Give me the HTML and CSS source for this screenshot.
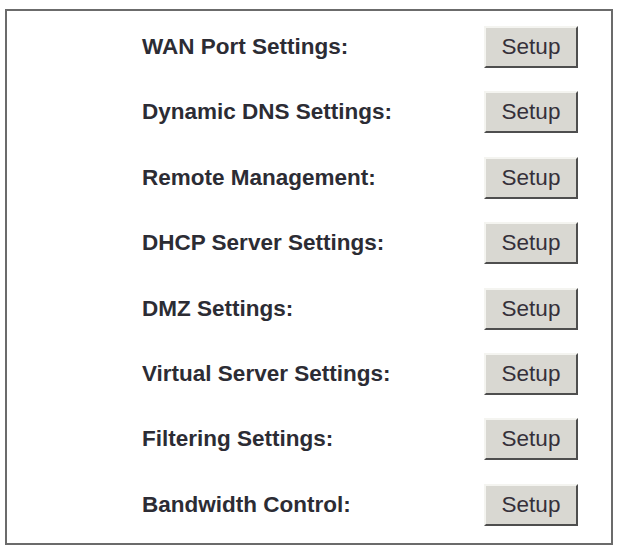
FILE: index.html
```html
<!DOCTYPE html>
<html>
<head lang="en">
    <meta charset="UTF-8">
    <title>Advanced Settings</title>
    <link rel="stylesheet" href="styles.css">
</head>
<body>
<div id="panel">
    <div class="row"><span class="label">WAN Port Settings:</span><button class="setup">Setup</button></div>
    <div class="row"><span class="label">Dynamic DNS Settings:</span><button class="setup">Setup</button></div>
    <div class="row"><span class="label">Remote Management:</span><button class="setup">Setup</button></div>
    <div class="row"><span class="label">DHCP Server Settings:</span><button class="setup">Setup</button></div>
    <div class="row"><span class="label">DMZ Settings:</span><button class="setup">Setup</button></div>
    <div class="row"><span class="label">Virtual Server Settings:</span><button class="setup">Setup</button></div>
    <div class="row"><span class="label">Filtering Settings:</span><button class="setup">Setup</button></div>
    <div class="row"><span class="label">Bandwidth Control:</span><button class="setup">Setup</button></div>
</div>
</body>
</html>
```

FILE: styles.css
```css
body,div,span,button{ margin:0; padding:0;}

body{
    background-color: #ffffff;
    font-family: "Liberation Sans", Arial, sans-serif;
}

#panel{
    width: 608px;
    margin: 9px 0 0 5px;
    border: 2px solid #6b6b6b;
    padding: 15px 33px 17px 135px;
    box-sizing: border-box;

    display: flex;
    flex-direction: column;
    gap: 23.4px;
}
#panel .row{
    height: 42px;
    display: flex;
    align-items: center;
    justify-content: space-between;
}
#panel .label{
    font-size: 22.5px;
    font-weight: bold;
    color: #2c2c34;
}
#panel .setup{
    width: 94px;
    height: 42px;
    box-sizing: border-box;
    background-color: #d9d8d2;
    border: 2px solid;
    border-color: #f4f4f0 #4e4e4e #4e4e4e #f4f4f0;
    font-family: "Liberation Sans", Arial, sans-serif;
    font-size: 22.5px;
    color: #35303a;
    cursor: pointer;
}
```
